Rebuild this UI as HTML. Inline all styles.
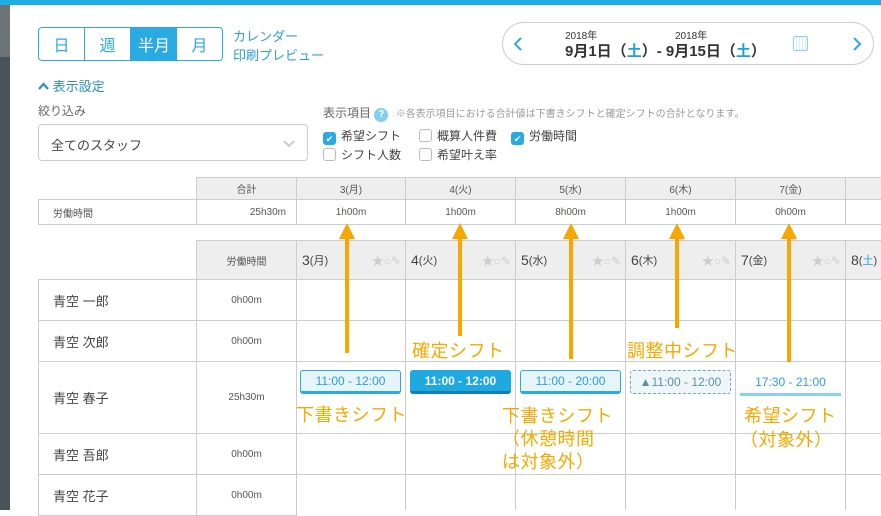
<!DOCTYPE html><html><head><meta charset="utf-8"><style>
*{box-sizing:border-box;margin:0;padding:0}
body{width:881px;height:510px;overflow:hidden;background:#fff;font-family:"Liberation Sans","Noto Sans CJK JP",sans-serif;position:relative;color:#444}
.a{position:absolute}
.bl{color:#1e9fd6}
.cell{position:absolute;border:1px solid #ccc;display:flex;align-items:center;justify-content:center;font-size:10px;color:#555}
.g{background:#eee}
.or{color:#f7a800;font-size:18px;font-weight:normal;position:absolute;line-height:22px;white-space:nowrap;letter-spacing:0.5px}
.line{position:absolute;width:4px;background:#f7a800}
.head{position:absolute;width:0;height:0;border-left:8px solid transparent;border-right:8px solid transparent;border-bottom:16px solid #f7a800}
.chip{position:absolute;height:24px;top:370px;width:101px;font-size:12px;display:flex;align-items:center;justify-content:center;border-radius:3px}
.cb{display:inline-block;width:13px;height:13px;border:1px solid #bbb;border-radius:3px;vertical-align:-2px;margin-right:5px;background:#fff}
.cb.on{background:#2aaae2;border-color:#2aaae2;color:#fff;font-size:9px;text-align:center;line-height:12px}
.icons{color:#ccc;font-size:12px;position:absolute;right:4px}
</style></head><body>
<div class="a" style="left:0;top:0;width:881px;height:5px;background:#1eaee3"></div>
<div class="a" style="left:0;top:5px;width:10px;height:52px;background:#6d7477"></div>
<div class="a" style="left:0;top:57px;width:10px;height:453px;background:#48535a"></div>
<div class="a" style="left:38px;top:27px;width:185px;height:34px;border:1px solid #2aaae2;border-radius:4px;display:flex;overflow:hidden;font-size:16px;color:#2aaae2">
<div style="width:46px;display:flex;align-items:center;justify-content:center;border-right:1px solid #2aaae2">日</div>
<div style="width:46px;display:flex;align-items:center;justify-content:center;border-right:1px solid #2aaae2">週</div>
<div style="width:46px;display:flex;align-items:center;justify-content:center;background:#2aaae2;color:#fff">半月</div>
<div style="width:45px;display:flex;align-items:center;justify-content:center">月</div></div>
<div class="a bl" style="left:233px;top:27px;font-size:13px;line-height:19px;color:#2a9fd8">カレンダー<br>印刷プレビュー</div>
<div class="a" style="left:38px;top:76px;font-size:13px;color:#2a8fc0"><svg width="11" height="8" style="vertical-align:1px"><path d="M1 7 L5.5 2 L10 7" stroke="#2a8fc0" stroke-width="2.2" fill="none"/></svg> 表示設定</div>
<div class="a" style="left:38px;top:102px;font-size:12px;color:#666">絞り込み</div>
<div class="a" style="left:38px;top:124px;width:270px;height:37px;border:1px solid #ccc;border-radius:4px;font-size:13px;padding:10px 12px;color:#444">全てのスタッフ<svg class="a" style="right:12px;top:15px" width="12" height="8"><path d="M1 1 L6 6 L11 1" stroke="#ccc" stroke-width="2" fill="none"/></svg></div>
<div class="a" style="left:323px;top:104px;font-size:12px;color:#666">表示項目 <span style="display:inline-block;width:14px;height:14px;border-radius:7px;background:#7fcff0;color:#fff;font-size:10px;text-align:center;line-height:14px;font-weight:bold">?</span> <span style="font-size:10px;color:#999;margin-left:4px">※各表示項目における合計値は下書きシフトと確定シフトの合計となります。</span></div>
<div class="a" style="left:323px;top:127px;font-size:12px;line-height:19px;color:#444">
<span class="cb on">✔</span>希望シフト<span style="display:inline-block;width:18px"></span><span class="cb"></span>概算人件費<span style="display:inline-block;width:14px"></span><span class="cb on">✔</span>労働時間<br>
<span class="cb"></span>シフト人数<span style="display:inline-block;width:18px"></span><span class="cb"></span>希望叶え率</div>
<div class="a" style="left:502px;top:22px;width:372px;height:43px;border:1px solid #ccc;border-radius:22px"></div>
<svg class="a" style="left:513px;top:37px" width="10" height="14"><path d="M8 1 L2 7 L8 13" stroke="#2aaae2" stroke-width="2" fill="none"/></svg>
<svg class="a" style="left:852px;top:37px" width="10" height="14"><path d="M2 1 L8 7 L2 13" stroke="#2aaae2" stroke-width="2" fill="none"/></svg>
<div class="a" style="left:565px;top:27px;font-size:10px;color:#333">2018年</div>
<div class="a" style="left:675px;top:27px;font-size:10px;color:#333">2018年</div>
<div class="a" style="left:565px;top:40px;font-size:15px;font-weight:bold;color:#333">9月1日（<span class="bl">土</span>）- 9月15日（<span class="bl">土</span>）</div>
<div class="a" style="left:793px;top:36px;width:15px;height:15px;border:1px solid #8bd0ee;border-radius:2px;background:repeating-linear-gradient(90deg,#fff 0 2px,#d4eef9 2px 3px)"></div>
<div class="cell" style="left:38px;top:199px;width:159px;height:26px;justify-content:flex-start;padding-left:14px">労働時間</div>
<div class="cell g" style="left:196px;top:177px;width:101px;height:23px">合計</div>
<div class="cell" style="left:196px;top:199px;width:101px;height:26px;justify-content:flex-end;padding-right:10px">25h30m</div>
<div class="cell g" style="left:296px;top:177px;width:110px;height:23px">3(月)</div><div class="cell" style="left:296px;top:199px;width:110px;height:26px">1h00m</div>
<div class="cell g" style="left:405px;top:177px;width:111px;height:23px">4(火)</div><div class="cell" style="left:405px;top:199px;width:111px;height:26px">1h00m</div>
<div class="cell g" style="left:515px;top:177px;width:111px;height:23px">5(水)</div><div class="cell" style="left:515px;top:199px;width:111px;height:26px">8h00m</div>
<div class="cell g" style="left:625px;top:177px;width:111px;height:23px">6(木)</div><div class="cell" style="left:625px;top:199px;width:111px;height:26px">1h00m</div>
<div class="cell g" style="left:735px;top:177px;width:111px;height:23px">7(金)</div><div class="cell" style="left:735px;top:199px;width:111px;height:26px">0h00m</div>
<div class="cell g" style="left:845px;top:177px;width:50px;height:23px"></div><div class="cell" style="left:845px;top:199px;width:50px;height:26px"></div>
<div class="cell g" style="left:196px;top:240px;width:101px;height:40px">労働時間</div>
<div class="cell g" style="left:296px;top:240px;width:110px;height:40px;justify-content:flex-start;padding-left:5px;font-size:14px;color:#444">3<small style="font-size:11px">(月)</small><span class="icons">★○✎</span></div>
<div class="cell g" style="left:405px;top:240px;width:111px;height:40px;justify-content:flex-start;padding-left:5px;font-size:14px;color:#444">4<small style="font-size:11px">(火)</small><span class="icons">★○✎</span></div>
<div class="cell g" style="left:515px;top:240px;width:111px;height:40px;justify-content:flex-start;padding-left:5px;font-size:14px;color:#444">5<small style="font-size:11px">(水)</small><span class="icons">★○✎</span></div>
<div class="cell g" style="left:625px;top:240px;width:111px;height:40px;justify-content:flex-start;padding-left:5px;font-size:14px;color:#444">6<small style="font-size:11px">(木)</small><span class="icons">★○✎</span></div>
<div class="cell g" style="left:735px;top:240px;width:111px;height:40px;justify-content:flex-start;padding-left:5px;font-size:14px;color:#444">7<small style="font-size:11px">(金)</small><span class="icons">★○✎</span></div>
<div class="cell g" style="left:845px;top:240px;width:50px;height:40px;justify-content:flex-start;padding-left:5px;font-size:14px;color:#444">8<small style="font-size:11px">(<span class="bl">土</span>)</small></div>
<div class="cell" style="left:38px;top:279px;width:159px;height:42px;justify-content:flex-start;padding-left:14px;font-size:13px;color:#444">青空 一郎</div><div class="cell" style="left:196px;top:279px;width:101px;height:42px">0h00m</div>
<div class="cell" style="left:38px;top:320px;width:159px;height:42px;justify-content:flex-start;padding-left:14px;font-size:13px;color:#444">青空 次郎</div><div class="cell" style="left:196px;top:320px;width:101px;height:42px">0h00m</div>
<div class="cell" style="left:38px;top:361px;width:159px;height:73px;justify-content:flex-start;padding-left:14px;font-size:13px;color:#444">青空 春子</div><div class="cell" style="left:196px;top:361px;width:101px;height:73px">25h30m</div>
<div class="cell" style="left:38px;top:433px;width:159px;height:42px;justify-content:flex-start;padding-left:14px;font-size:13px;color:#444">青空 吾郎</div><div class="cell" style="left:196px;top:433px;width:101px;height:42px">0h00m</div>
<div class="cell" style="left:38px;top:474px;width:159px;height:42px;justify-content:flex-start;padding-left:14px;font-size:13px;color:#444">青空 花子</div><div class="cell" style="left:196px;top:474px;width:101px;height:42px">0h00m</div>
<div class="a" style="left:296px;top:279px;width:1px;height:231px;background:#ccc"></div>
<div class="a" style="left:405px;top:279px;width:1px;height:231px;background:#ccc"></div>
<div class="a" style="left:515px;top:279px;width:1px;height:231px;background:#ccc"></div>
<div class="a" style="left:625px;top:279px;width:1px;height:231px;background:#ccc"></div>
<div class="a" style="left:735px;top:279px;width:1px;height:231px;background:#ccc"></div>
<div class="a" style="left:845px;top:279px;width:1px;height:231px;background:#ccc"></div>
<div class="a" style="left:296px;top:320px;width:585px;height:1px;background:#ccc"></div>
<div class="a" style="left:296px;top:361px;width:585px;height:1px;background:#ccc"></div>
<div class="a" style="left:296px;top:433px;width:585px;height:1px;background:#ccc"></div>
<div class="a" style="left:296px;top:474px;width:585px;height:1px;background:#ccc"></div>
<div class="chip" style="left:300px;background:#e6f4fc;border:1px solid #2aaae2;border-bottom-width:3px;color:#2a9fd8">11:00 - 12:00</div>
<div class="chip" style="left:410px;background:#1fa9e1;border-bottom:3px solid #1580ad;color:#fff;font-weight:bold">11:00 - 12:00</div>
<div class="chip" style="left:520px;background:#e6f4fc;border:1px solid #2aaae2;border-bottom-width:3px;color:#2a9fd8">11:00 - 20:00</div>
<div class="chip" style="left:630px;background:#eef6fa;border:1px dashed #6fa8c0;color:#5f8fa5">▲11:00 - 12:00</div>
<div class="chip" style="left:740px;color:#2a9fd8;border-bottom:3px solid #87d3ee;border-radius:0;height:26px">17:30 - 21:00</div>
<div class="line" style="left:345px;top:236px;height:117px"></div><div class="head" style="left:339px;top:223px"></div>
<div class="line" style="left:458px;top:236px;height:100px"></div><div class="head" style="left:452px;top:223px"></div>
<div class="line" style="left:569px;top:236px;height:123px"></div><div class="head" style="left:563px;top:223px"></div>
<div class="line" style="left:675px;top:236px;height:92px"></div><div class="head" style="left:669px;top:223px"></div>
<div class="line" style="left:787px;top:236px;height:126px"></div><div class="head" style="left:781px;top:223px"></div>
<div class="or" style="left:412px;top:340px">確定シフト</div>
<div class="or" style="left:627px;top:340px">調整中シフト</div>
<div class="or" style="left:296px;top:404px">下書きシフト</div>
<div class="or" style="left:502px;top:405px;line-height:23px">下書きシフト<br>（休憩時間<br>は対象外）</div>
<div class="or" style="left:744px;top:404px;line-height:24px">希望シフト<br><span style="margin-left:-4px">（対象外）</span></div>
</body></html>
